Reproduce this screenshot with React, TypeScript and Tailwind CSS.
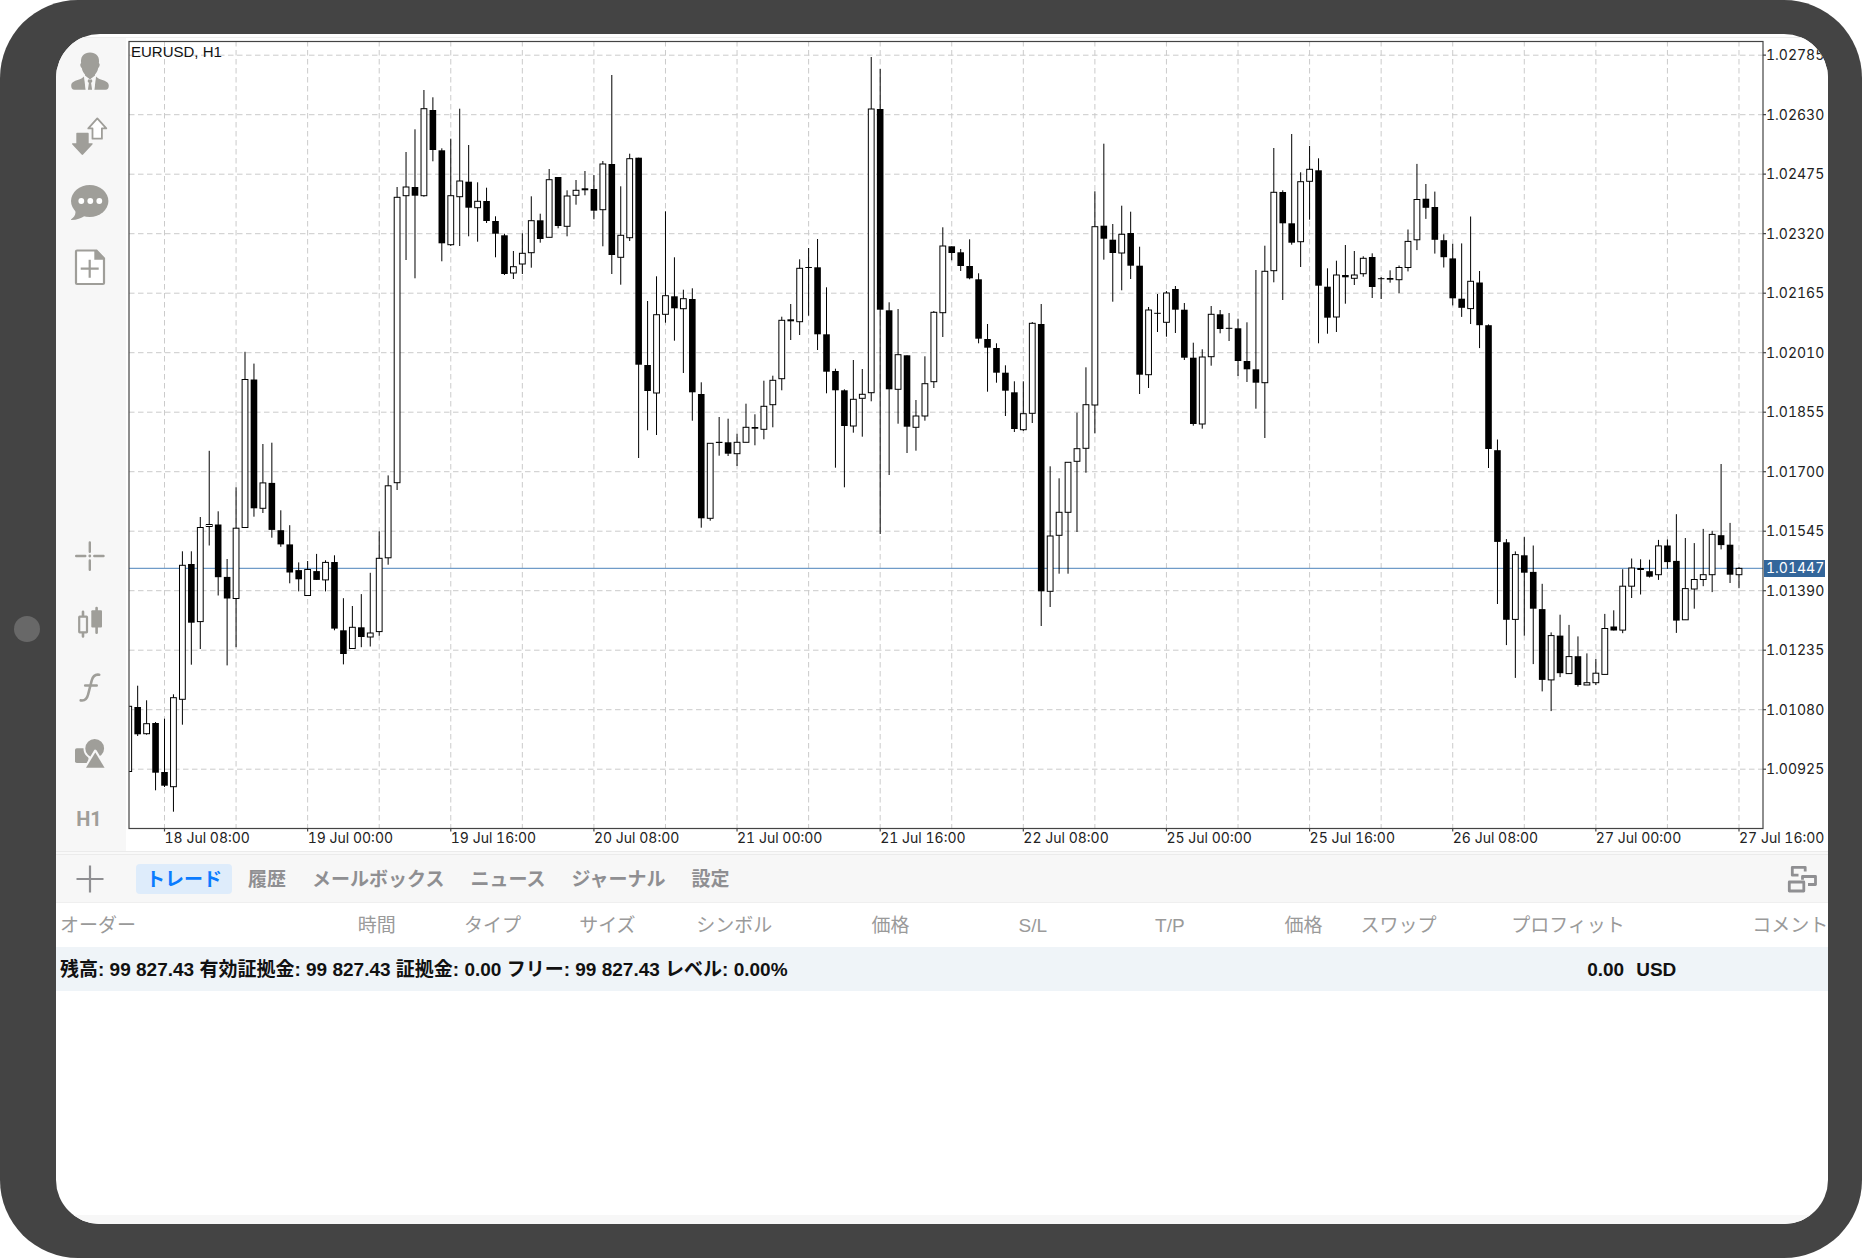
import { ReactNode } from 'react';

type Candle = [high: number, top: number, bottom: number, low: number, filled: 0 | 1];

// Hourly candles, in chart units
const candles: Candle[] = [
  [706.3, 706.3, 771.5, 771.5, 0], [685.7, 707, 734.3, 736, 1], [700.3, 723.7, 733.7, 734.7, 0], [722, 723, 772.7, 790.3, 1],
  [718.7, 772, 785.7, 787, 1], [694.3, 697.7, 786.7, 811.7, 0], [551.3, 565.3, 699.3, 724.7, 0], [551.3, 564, 622.7, 664.7, 1],
  [517, 527.5, 621.6, 649, 0], [450.8, 524.5, 526.5, 545.5, 0], [511.3, 524.5, 577.2, 595.5, 1], [559, 576.9, 598.5, 665.4, 1],
  [487.3, 528.2, 598.5, 647.2, 0], [351.8, 379.5, 527.5, 527.5, 0], [363.6, 379.5, 508.3, 516.7, 1], [444, 482.9, 508.3, 513, 0],
  [442.7, 482.9, 529.9, 537.7, 1], [510.3, 530.2, 544.4, 546.8, 1], [525.2, 544.4, 572.5, 583.3, 1], [562.4, 570.1, 579.3, 591.4, 1],
  [561, 569.5, 595.5, 595.5, 0], [553.9, 571.1, 579.9, 580, 1], [560.3, 562.4, 579.9, 591.4, 0], [555.3, 562, 628.6, 630.3, 1],
  [598.2, 630.3, 654, 664.4, 1], [606, 627.3, 648.5, 648.5, 0], [594.1, 627.3, 637, 647.2, 1], [572.8, 633, 637, 646.5, 0],
  [531.3, 558.3, 631.6, 635.7, 0], [475.4, 485.8, 557.8, 564.7, 0], [187, 197.3, 482.7, 490, 0], [152, 187, 195.7, 260, 0],
  [129.3, 187, 195.7, 278.3, 1], [90, 108.7, 195.7, 196.7, 0], [97.3, 110, 150, 161.3, 1], [148.3, 150.3, 243.3, 261.3, 1],
  [138.7, 195.7, 244.7, 246, 0], [108.7, 181, 196.7, 246, 0], [145, 181.7, 207.7, 236.3, 1], [182.3, 201.3, 207.7, 241.7, 0],
  [187.7, 201, 221, 223, 1], [216.3, 221, 233.7, 257.3, 1], [233.7, 235.3, 274, 275, 1], [251, 266.7, 273, 279, 0],
  [233.3, 253.3, 264, 274, 0], [196.3, 220.7, 252.7, 267.7, 0], [213.7, 220.3, 239, 242.7, 1], [169, 179.7, 237.3, 237.3, 0],
  [177, 177, 226, 228.3, 1], [190.3, 196, 226.3, 236.3, 0], [180, 190.3, 195.3, 204.7, 0], [171, 188.3, 190.3, 195.3, 1],
  [175, 189, 210.7, 219.3, 1], [161, 164, 209.7, 246.3, 0], [75, 164, 255, 274, 1], [186.3, 235.3, 257.3, 284.7, 0],
  [153.7, 158.7, 237.7, 241, 0], [157.7, 157.7, 364.7, 458, 1], [301, 365, 391, 430.3, 1], [276.3, 314.7, 393, 435, 0],
  [211.3, 295.7, 314.3, 322.7, 0], [257.3, 296.3, 308.3, 340.7, 1], [289.7, 298.7, 308.7, 373, 0], [288.3, 299, 392.3, 420.7, 1],
  [382.3, 394, 518.3, 527.7, 1], [443.3, 443.3, 518.3, 520.7, 0], [417, 441.8, 443, 455.7, 1], [418.7, 442.3, 453.7, 456, 1],
  [433.7, 442.3, 453.7, 466, 0], [403.7, 427.3, 442.3, 442.3, 0], [414.3, 427, 428.7, 445.3, 1], [380.7, 406.3, 429.3, 439.3, 0],
  [375.7, 380.3, 404.7, 427.3, 0], [316.7, 320.3, 378.7, 390.3, 0], [304, 319.3, 321.3, 340, 1], [259.3, 268.3, 321.7, 335, 0],
  [248, 267.5, 267.5, 315.7, 1], [239, 267.3, 334.3, 350, 1], [287.3, 334.3, 371.7, 393.3, 1], [368.7, 371, 390.3, 467.7, 1],
  [389.3, 390.3, 426, 487.3, 1], [360, 399.3, 426, 432.7, 0], [369, 394.3, 398.3, 436.7, 0], [57, 109, 392.7, 401.3, 0],
  [69, 109, 309.7, 534, 1], [302.3, 310.3, 389.3, 475, 1], [309, 354.7, 389.3, 423.7, 0], [355.3, 355.3, 426.7, 453, 1],
  [400, 416, 427.3, 450.7, 0], [356.3, 383.7, 416, 420.7, 0], [311, 312.3, 381.7, 388, 0], [227.3, 246, 312.7, 337, 0],
  [246.3, 246.3, 253, 260.3, 1], [249, 252.3, 266, 271, 1], [239.3, 266, 278.3, 279.3, 1], [273.3, 279.3, 338.7, 343.3, 1],
  [324, 339, 347.7, 391.7, 1], [343.3, 348, 372.7, 382.7, 1], [365.3, 372.7, 390.7, 416, 1], [381.3, 392.3, 429, 432, 1],
  [381.3, 413.7, 429.7, 431, 0], [322, 323.3, 413.3, 423, 0], [304, 324, 591.3, 626, 1], [466.3, 536, 591.3, 607, 0],
  [478.3, 512.3, 535.3, 573.7, 0], [462.3, 462.3, 512.3, 573.7, 0], [412.7, 448.7, 461.3, 532, 0], [367.3, 404.7, 448.3, 472.7, 0],
  [191.3, 226.7, 405, 433.3, 0], [143.7, 225.7, 238.7, 259.7, 1], [224, 239.7, 253, 301.7, 1], [205.7, 234.3, 253, 290.3, 0],
  [211.7, 233, 265.7, 279, 1], [246.7, 265.7, 374.7, 394, 1], [307, 310, 374.7, 388, 0], [294, 313.3, 313.3, 332, 1],
  [291, 293, 322.3, 336.7, 0], [286, 289, 309.7, 333, 1], [303, 309.7, 357.7, 360, 1], [342.7, 357.7, 424, 425.7, 1],
  [349.3, 357, 424, 428.7, 0], [306, 314.3, 356.7, 365.7, 0], [310, 314.3, 329, 333.3, 1], [313, 328.3, 328.3, 341, 1],
  [318.7, 328.3, 361, 376, 1], [322.3, 361, 369.3, 382, 1], [270, 369.3, 382.7, 408.7, 1], [245.7, 271.3, 382.7, 438, 0],
  [148, 192.3, 270.7, 282.3, 0], [190.3, 192, 223.3, 300, 1], [134, 223.3, 242.7, 244.7, 1], [172.3, 181.7, 241.7, 267, 0],
  [146, 169.3, 181.3, 219.7, 0], [158.3, 170.3, 285.7, 343.3, 1], [268.3, 286.7, 317.7, 333.7, 1], [260.7, 275, 317, 332, 0],
  [245, 275, 277.3, 303.7, 1], [251, 275, 278.3, 285, 0], [256.3, 258.3, 273.7, 276.7, 0], [253.3, 257, 287, 298, 1],
  [277, 278.7, 278.7, 299, 1], [270.3, 278, 279.7, 282.7, 1], [265.5, 267.5, 279.7, 293.2, 0], [229.5, 241.4, 267.5, 271.4, 0],
  [163.9, 199.5, 239.8, 250.1, 0], [184, 198.7, 207.8, 218.9, 1], [191.6, 207, 239.8, 253.6, 1], [234.3, 240.2, 257.2, 267.5, 1],
  [243.8, 258.4, 298.3, 305.4, 1], [243.4, 298.7, 307.8, 316.9, 1], [216.5, 281.3, 308.6, 324, 0], [271, 282.5, 325.2, 348.1, 1],
  [324.4, 325.2, 449, 468, 1], [439.5, 450.2, 541.9, 604, 1], [539.1, 542.3, 619.8, 645.1, 1], [551.4, 554.6, 619.4, 677.9, 0],
  [537.1, 555.3, 572.7, 635.6, 1], [545.5, 571.9, 608.7, 664.1, 1], [583.8, 609.1, 679.9, 691.4, 1], [632.4, 635.6, 679.9, 711.1, 0],
  [614.7, 635.6, 673.2, 677.1, 1], [624.9, 656.6, 673.6, 674, 0], [636.4, 656.2, 685, 686.6, 1], [653.4, 682.7, 685, 685, 0],
  [658.9, 673.2, 682.7, 685, 0], [613.9, 628.5, 674.4, 674.4, 0], [610.3, 626.5, 630.5, 630.5, 1], [569.2, 586.2, 630.1, 633.2, 0],
  [558.5, 568, 586.2, 598, 0], [559.3, 568, 570, 594.5, 1], [559.7, 571.2, 576.7, 577.5, 1], [539.9, 545.9, 574.7, 579.9, 0],
  [539.5, 545.5, 562.1, 568.8, 1], [514.2, 560.9, 620.6, 632.9, 1], [538, 588.6, 619.8, 619.8, 0], [543.1, 579.5, 589, 608.7, 0],
  [528.9, 574.7, 579.5, 586.2, 0], [530.8, 534.4, 574.7, 592.1, 0], [464, 535.2, 545.1, 549.4, 1], [522.9, 544.7, 574.7, 583, 1],
  [567.2, 568.4, 574.7, 588.2, 0],
];

const prices = [
  '1.02785', '1.02630', '1.02475', '1.02320', '1.02165', '1.02010', '1.01855',
  '1.01700', '1.01545', '1.01390', '1.01235', '1.01080', '1.00925',
];

const times = [
  '18 Jul 08:00', '19 Jul 00:00', '19 Jul 16:00', '20 Jul 08:00', '21 Jul 00:00', '21 Jul 16:00',
  '22 Jul 08:00', '25 Jul 00:00', '25 Jul 16:00', '26 Jul 08:00', '27 Jul 00:00', '27 Jul 16:00',
];

const tabs = ['トレード', '履歴', 'メールボックス', 'ニュース', 'ジャーナル', '設定'];

const columns = [
  { label: 'オーダー', width: 'w-[16.8%]' },
  { label: '時間', width: 'w-[6%]' },
  { label: 'タイプ', width: 'w-[6.5%]' },
  { label: 'サイズ', width: 'w-[6.6%]' },
  { label: 'シンボル', width: 'w-[9.9%]' },
  { label: '価格', width: 'w-[8.3%]' },
  { label: 'S/L', width: 'w-[7.7%]' },
  { label: 'T/P', width: 'w-[7.3%]' },
  { label: '価格', width: 'w-[4.3%]' },
  { label: 'スワップ', width: 'w-[8.5%]' },
  { label: 'プロフィット', width: 'w-[13.6%]' },
  { label: 'コメント', width: 'w-[4.5%]' },
];

const LEFT = 129;
const RIGHT = 1763;
const TOP = 41;
const BOTTOM = 828.5;
const STEP = 8.946;
const ORIGIN = 164.5;

const priceY = (i: number) => 55.2 + i * 59.5;
const candleX = (i: number) => ORIGIN + (i - 4) * STEP;

const Chart = () => (
  <svg viewBox="126 38 1702 813" className="block w-full min-w-0 flex-1 bg-white" role="img" aria-label="EURUSD, H1">
    <clipPath id="plot">
      <rect x={LEFT} y={TOP} width={RIGHT - LEFT} height={BOTTOM - TOP} />
    </clipPath>

    {/* Grid */}
    <g stroke="#cbcbcb" strokeWidth="1" strokeDasharray="5.5 3.5">
      {prices.map((p, i) => (
        <line key={p} x1={LEFT} x2={RIGHT} y1={priceY(i)} y2={priceY(i)} />
      ))}
      {Array.from({ length: 23 }, (_, i) => (
        <line key={i} x1={ORIGIN + i * 8 * STEP} x2={ORIGIN + i * 8 * STEP} y1={TOP} y2={BOTTOM} />
      ))}
    </g>

    <line x1={LEFT} x2={RIGHT} y1="568.3" y2="568.3" stroke="#6f9bc8" strokeWidth="1.2" />

    {/* Candles */}
    <g clipPath="url(#plot)" stroke="#000" strokeWidth="1">
      {candles.map(([high, top, bottom, low, filled], i) => {
        const x = candleX(i);
        return (
          <g key={i}>
            <line x1={x} x2={x} y1={high} y2={low} />
            {top === bottom ? (
              <line x1={x - 3.3} x2={x + 3.3} y1={top} y2={top} />
            ) : filled ? (
              <rect x={x - 3.3} y={top} width="6.6" height={bottom - top} fill="#000" stroke="none" />
            ) : (
              <rect x={x - 2.9} y={top} width="5.8" height={bottom - top} fill="#fff" />
            )}
          </g>
        );
      })}
    </g>

    {/* Frame and ticks */}
    <g stroke="#444" strokeWidth="1.2" fill="none">
      <rect x={LEFT} y={TOP + 0.5} width={RIGHT - LEFT} height={BOTTOM - TOP - 0.5} />
      {prices.map((p, i) => (
        <line key={p} x1={RIGHT} x2={RIGHT + 3} y1={priceY(i)} y2={priceY(i)} />
      ))}
      {times.map((t, i) => (
        <line key={t} x1={ORIGIN + i * 16 * STEP} x2={ORIGIN + i * 16 * STEP} y1={BOTTOM} y2={BOTTOM + 3} />
      ))}
    </g>

    {/* Labels */}
    <g className="font-['Inter','Liberation_Sans',sans-serif] text-[14px] tabular-nums" fill="#222">
      {prices.map((p, i) => (
        <text key={p} x={RIGHT + 3} y={priceY(i) + 5}>{p}</text>
      ))}
      {times.map((t, i) => (
        <text key={t} x={ORIGIN + i * 16 * STEP} y="843">{t}</text>
      ))}
      <rect x="1764" y="560" width="61" height="17" fill="#33669b" />
      <text x={RIGHT + 3} y="573" fill="#fff">1.01447</text>
    </g>
    <text x="131" y="57" className="font-['Liberation_Sans',Arial,sans-serif] text-[15px]" fill="#111">EURUSD, H1</text>
  </svg>
);

const SideButton = ({ label, className, children }: { label: string; className: string; children: ReactNode }) => (
  <button type="button" aria-label={label} className={`flex w-full items-center justify-center text-[#9f9e99] ${className}`}>
    {children}
  </button>
);

const Icon = ({ children }: { children: ReactNode }) => (
  <svg viewBox="0 0 40 40" className="h-10 w-10" fill="currentColor">{children}</svg>
);

const Sidebar = () => (
  <nav className="flex w-[70px] shrink-0 flex-col justify-between bg-[#f7f7f7]">
    <div>
      <SideButton label="アカウント" className="h-[65px]">
        <Icon>
          <path d="M19 1.5c6 0 9 3.6 9 8.5 0 .8-.1 1.6-.1 2.3 1.3.2 1 3.7-.7 4.7-.6 3.2-1.7 5-3.2 6.4v1.2L19 28.5l-5-3.9v-1.2c-1.5-1.4-2.6-3.2-3.2-6.4-1.7-1-2-4.500-.7-4.700 0-.7-.1-1.5-.1-2.3 0-4.9 3-8.500 9-8.500Z" />
          <path d="M13 25.5 14.600 38.700H3.600C1 38.700.2 36.800.2 34.700c0-4.200 4.800-5 8.600-6.400 1.700-.6 3.200-1.600 4.200-2.800ZM25 25.5 23.400 38.700h11c2.600 0 3.400-1.900 3.400-4 0-4.200-4.800-5-8.600-6.400-1.700-.6-3.200-1.600-4.200-2.800Z" />
          <path d="m13.400 25.200 5.600 3.200 5.600-3.200-1.600 13.500h-8Z" fill="#f7f7f7" />
          <path d="M17 28.600h4l.3 1.800-1.200 1.600 1 6.700h-4.200l1-6.700-1.200-1.600Z" />
        </Icon>
      </SideButton>
      <SideButton label="注文" className="h-[66px]">
        <Icon>
          <path d="M26.300 2.400 35.300 12.400H30.900V22.700H21.500V12.400H17.300Z" fill="#fff" stroke="currentColor" strokeWidth="1.8" strokeLinejoin="round" />
          <path d="M6.300 16.700h10.400c.6 0 1 .4 1 1v9.600h3.200c.8 0 1 .7.5 1.3l-9.300 9.900c-.5.5-1 .5-1.5 0l-9.300-9.900c-.5-.6-.3-1.300.5-1.300h3.500v-9.600c0-.6.4-1 1-1Z" />
        </Icon>
      </SideButton>
      <SideButton label="チャット" className="h-[65px]">
        <Icon>
          <ellipse cx="18.7" cy="19" rx="18.7" ry="16" />
          <path d="M4 27c1.5 4.5-.5 8-3.800 10.200C-.2 37.600 0 38 .5 38c5.500 0 9.500-1.500 13.500-4.200Z" />
          <circle cx="10.3" cy="19" r="2.9" fill="#fff" />
          <circle cx="19.3" cy="19" r="2.9" fill="#fff" />
          <circle cx="28.3" cy="19" r="2.9" fill="#fff" />
        </Icon>
      </SideButton>
      <SideButton label="新規" className="h-[66px]">
        <Icon>
          <path d="M6 3.500h19.500l7.500 8V36a1 1 0 0 1-1 1H6a1 1 0 0 1-1-1V4.500a1 1 0 0 1 1-1Z" fill="#fff" stroke="currentColor" strokeWidth="2.2" />
          <path d="M23.300 3h2.400l8 8.500v1.300H23.300Z" />
          <path d="M9.700 21.700h18M18.700 12.700v18" stroke="currentColor" strokeWidth="2.2" />
        </Icon>
      </SideButton>
    </div>

    <div>
      <SideButton label="十字カーソル" className="h-[66px]">
        <Icon>
          <path d="M5.200 20H14.300M23.300 20H32.500M18.800 6.500V15.700M18.800 24.500V33.700" stroke="currentColor" strokeWidth="2.4" strokeLinecap="round" />
          <circle cx="18.8" cy="20" r="1.4" />
        </Icon>
      </SideButton>
      <SideButton label="チャートタイプ" className="h-[66px]">
        <Icon>
          <path d="M12 9.800V14M12 31v3.400M25.600 6V9M25.600 25v5.800" stroke="currentColor" strokeWidth="2.6" strokeLinecap="round" />
          <rect x="8.2" y="14.7" width="7.8" height="15.6" rx=".5" fill="none" stroke="currentColor" strokeWidth="2.2" />
          <rect x="20.3" y="8.3" width="10.7" height="17.3" rx="1" />
        </Icon>
      </SideButton>
      <SideButton label="インディケータ" className="h-[65px]">
        <Icon>
          <path d="M9.700 32.400c4.300.7 6.300-1.400 7.400-5.900l3.600-14c1.200-4.600 3.200-6.500 7.500-5.800M14.200 17.500h11.500" fill="none" stroke="currentColor" strokeWidth="2.6" strokeLinecap="round" />
        </Icon>
      </SideButton>
      <SideButton label="オブジェクト" className="h-[66px]">
        <Icon>
          <rect x="4" y="15.3" width="13.5" height="14.7" rx="1.8" />
          <circle cx="23.7" cy="15.4" r="10.3" stroke="#f7f7f7" strokeWidth="1.8" />
          <path d="m24.300 18.300 9.800 16.700H14.500Z" stroke="#f7f7f7" strokeWidth="3.2" strokeLinejoin="round" />
          <path d="m24.300 19.600 9.300 15.100H15Z" />
        </Icon>
      </SideButton>
      <SideButton label="時間足 H1" className="h-[65px]">
        <span className="pr-1 font-['Liberation_Sans_Narrow','Roboto',sans-serif] text-[20px] font-bold">H1</span>
      </SideButton>
    </div>
  </nav>
);

const Toolbar = () => (
  <div className="flex h-12 items-center border-b border-[#efefef] bg-[#f7f7f7] pr-[11px] text-[#8f8f92]">
    <button type="button" aria-label="追加" className="flex w-20 justify-start pl-5">
      <svg viewBox="0 0 28 28" className="h-7 w-7" stroke="currentColor" strokeWidth="2.2">
        <path d="M.5 14h27M14 .5v27" />
      </svg>
    </button>
    <div className="flex flex-1 gap-1.5">
      {tabs.map((tab, i) => (
        <button
          key={tab}
          type="button"
          className={`rounded px-2.5 pt-0.5 text-[19px] leading-7 font-bold whitespace-nowrap ${i === 0 ? 'bg-[#deecfb] text-[#0a7bff]' : ''}`}
        >
          {tab}
        </button>
      ))}
    </div>
    <button type="button" aria-label="ウィンドウ" className="flex">
      <svg viewBox="0 0 30 28" className="h-7 w-[30px]" fill="none" stroke="currentColor" strokeWidth="2.8" strokeLinejoin="round">
        <path d="M11.500 10.200H5.300V2.300H18.200V6.500" />
        <path d="M15.500 14.700V11.500H28.500V19.500H21" />
        <rect x="2.3" y="17" width="14.5" height="9" />
      </svg>
    </button>
  </div>
);

const App = () => {
  return (
    <div className="bg-white font-['Liberation_Sans','Noto_Sans_CJK_JP',sans-serif]">
      <div className="flex min-h-screen rounded-[78px] bg-[#444] py-[34px] pr-[34px]">
        {/* Bezel with the home button */}
        <div className="flex w-14 shrink-0 items-center justify-center pr-0.5">
          <div className="h-[26px] w-[26px] rounded-full bg-[#686868]" />
        </div>

        {/* Screen */}
        <main className="flex min-w-0 flex-1 flex-col overflow-hidden rounded-[44px] bg-white">
          <div className="h-1 border-b border-[#eeeeee]" />
          <div className="flex">
            <Sidebar />
            <Chart />
          </div>
          <div className="h-1 border-y border-[#ebebeb] bg-[#f9f9f9]" />
          <Toolbar />

          <table className="w-full table-fixed text-left text-[19px] whitespace-nowrap">
            <thead>
              <tr className="h-11 text-[#9a9a9a]">
                {columns.map((col, i) => (
                  <th key={i} className={`${col.width} pt-0.5 pb-0 pl-1 font-normal`}>{col.label}</th>
                ))}
              </tr>
            </thead>
            <tbody>
              <tr className="h-11 bg-[#eff4f8] font-bold text-[#111]">
                <td colSpan={10} className="pt-0.5 pb-0 pl-1">
                  残高: 99 827.43 有効証拠金: 99 827.43 証拠金: 0.00 フリー: 99 827.43 レベル: 0.00%
                </td>
                <td colSpan={2} className="pt-0.5 pb-0 pl-20">
                  <div className="flex gap-3">
                    <span>0.00</span>
                    <span>USD</span>
                  </div>
                </td>
              </tr>
            </tbody>
          </table>

          <div className="mt-auto h-[9px] bg-[#f7f7f7]" />
        </main>
      </div>
    </div>
  );
};

export default App;
